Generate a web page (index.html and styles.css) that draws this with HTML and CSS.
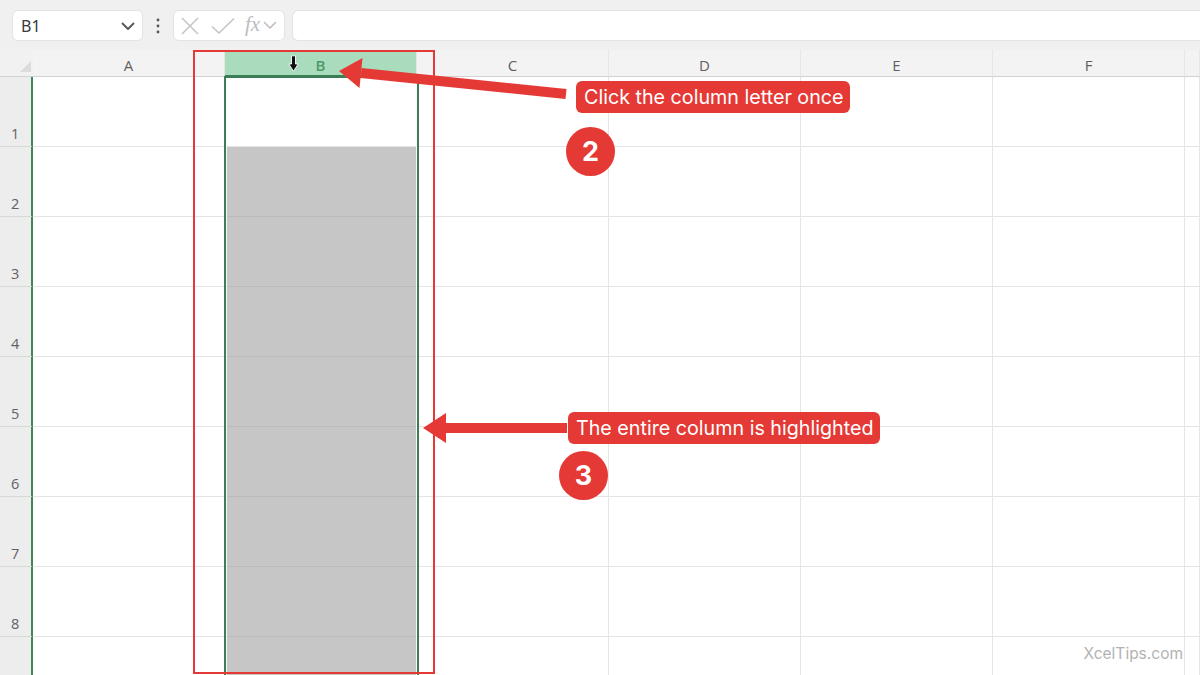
FILE: index.html
```html
<!DOCTYPE html>
<html lang="en">
<head>
<meta charset="utf-8">
<title>Select entire column</title>
<link rel="stylesheet" href="styles.css">
</head>
<body>
<div class="app">
  <header class="toolbar">
    <div class="namebox">
      <span class="ref">B1</span>
      <svg class="chev" width="14" height="9" viewBox="0 0 14 9"><path d="M1.5 1.5 L7 7 L12.5 1.5" fill="none" stroke="#555" stroke-width="1.8" stroke-linecap="round" stroke-linejoin="round"/></svg>
    </div>
    <svg class="kebab" width="4" height="16" viewBox="0 0 4 16"><circle cx="2" cy="2" r="1.4" fill="#555"/><circle cx="2" cy="8" r="1.4" fill="#555"/><circle cx="2" cy="14" r="1.4" fill="#555"/></svg>
    <div class="fbtns">
      <svg width="18" height="18" viewBox="0 0 18 18"><path d="M1 1 L17 17 M17 1 L1 17" stroke="#c4c4c4" stroke-width="1.5" fill="none"/></svg>
      <svg width="24" height="18" viewBox="0 0 24 18"><path d="M1 9.5 L8 16 L23 1.5" stroke="#c4c4c4" stroke-width="1.5" fill="none"/></svg>
      <span class="fx">fx</span>
      <svg width="14" height="9" viewBox="0 0 14 9"><path d="M1.5 1.5 L7 7 L12.5 1.5" fill="none" stroke="#bdbdbd" stroke-width="1.6" stroke-linecap="round" stroke-linejoin="round"/></svg>
    </div>
    <div class="finput"></div>
  </header>

  <div class="sheet">
    <div class="corner"><span class="tri"></span></div>
    <div class="colhead">A</div>
    <div class="colhead sel">
      <svg class="cursor" width="11" height="17" viewBox="0 0 11 17"><path d="M3.5 0.8 H7.5 V9 H10.2 L5.5 16.2 L0.8 9 H3.5 Z" fill="#111" stroke="#fff" stroke-width="0.9"/></svg>
      <span>B</span>
    </div>
    <div class="colhead">C</div>
    <div class="colhead">D</div>
    <div class="colhead">E</div>
    <div class="colhead">F</div>
    <div class="colhead"></div>

    <div class="rowhead">1</div><div class="cell"></div><div class="cell"></div><div class="cell"></div><div class="cell"></div><div class="cell"></div><div class="cell"></div><div class="cell"></div>
    <div class="rowhead">2</div><div class="cell"></div><div class="cell gray"></div><div class="cell"></div><div class="cell"></div><div class="cell"></div><div class="cell"></div><div class="cell"></div>
    <div class="rowhead">3</div><div class="cell"></div><div class="cell gray"></div><div class="cell"></div><div class="cell"></div><div class="cell"></div><div class="cell"></div><div class="cell"></div>
    <div class="rowhead">4</div><div class="cell"></div><div class="cell gray"></div><div class="cell"></div><div class="cell"></div><div class="cell"></div><div class="cell"></div><div class="cell"></div>
    <div class="rowhead">5</div><div class="cell"></div><div class="cell gray"></div><div class="cell"></div><div class="cell"></div><div class="cell"></div><div class="cell"></div><div class="cell"></div>
    <div class="rowhead">6</div><div class="cell"></div><div class="cell gray"></div><div class="cell"></div><div class="cell"></div><div class="cell"></div><div class="cell"></div><div class="cell"></div>
    <div class="rowhead">7</div><div class="cell"></div><div class="cell gray"></div><div class="cell"></div><div class="cell"></div><div class="cell"></div><div class="cell"></div><div class="cell"></div>
    <div class="rowhead">8</div><div class="cell"></div><div class="cell gray"></div><div class="cell"></div><div class="cell"></div><div class="cell"></div><div class="cell"></div><div class="cell"></div>
    <div class="rowhead"></div><div class="cell"></div><div class="cell gray"></div><div class="cell"></div><div class="cell"></div><div class="cell"></div><div class="cell"></div><div class="cell"></div>
  </div>

  <div class="selection"></div>
  <div class="redbox"></div>

  <svg class="arrows" width="1200" height="675" viewBox="0 0 1200 675">
    <line x1="566" y1="94" x2="361" y2="73" stroke="#e53935" stroke-width="10"/>
    <polygon points="339,71 362.5,58 359.5,88" fill="#e53935"/>
    <line x1="567" y1="428" x2="444" y2="428" stroke="#e53935" stroke-width="10"/>
    <polygon points="423,428 446,413 446,443" fill="#e53935"/>
  </svg>

  <div class="callout c1">Click the column letter once</div>
  <div class="badge b2">2</div>
  <div class="callout c2">The entire column is highlighted</div>
  <div class="badge b3">3</div>

  <div class="watermark">XcelTips.com</div>
</div>
</body>
</html>
```

FILE: styles.css
```css
html, body {
  margin: 0;
  padding: 0;
  background: #ffffff;
}

.app {
  position: relative;
  width: 1200px;
  height: 675px;
  overflow: hidden;
  font-family: "Open Sans", "Noto Sans", "Liberation Sans", sans-serif;
  background: #ffffff;
}

/* ---------- toolbar ---------- */
.toolbar {
  height: 50px;
  box-sizing: border-box;
  padding: 10px 0 9px 12px;
  display: flex;
  align-items: stretch;
  background: #f0f0f0;
}

.namebox {
  width: 131px;
  box-sizing: border-box;
  background: #ffffff;
  border: 1px solid #e3e3e3;
  border-radius: 6px;
  display: flex;
  align-items: center;
  justify-content: space-between;
  padding: 0 7px 0 8px;
}

.ref {
  font-size: 16px;
  color: #3a3a3a;
  font-family: "Noto Sans", "Open Sans", sans-serif;
}

.chev {
  margin-top: 2px;
}

.kebab {
  align-self: center;
  margin: 0 13px 0 13px;
}

.fbtns {
  width: 112px;
  box-sizing: border-box;
  background: #ffffff;
  border: 1px solid #e3e3e3;
  border-radius: 6px;
  display: flex;
  align-items: center;
  padding: 0 3px 0 7px;
}

.fbtns svg:first-child {
  margin-right: 12px;
}

.fbtns svg:nth-child(2) {
  margin-right: 10px;
}

.fx {
  font-family: "Liberation Serif", "DejaVu Serif", serif;
  font-style: italic;
  font-size: 21px;
  color: #bdbdbd;
  line-height: 1;
  margin-right: 3px;
  margin-top: -2px;
}

.finput {
  flex: 1;
  margin-left: 7px;
  background: #ffffff;
  border: 1px solid #e3e3e3;
  border-right: none;
  border-radius: 6px 0 0 6px;
}

/* ---------- sheet grid ---------- */
.sheet {
  display: grid;
  grid-template-columns: 33px repeat(6, 192px) 1fr;
  grid-template-rows: 27px repeat(9, 70px);
  height: 625px;
  overflow: hidden;
}

.corner {
  background: #f1f1f1;
  border-bottom: 1px solid #d2d2d2;
  position: relative;
}

.tri {
  position: absolute;
  right: 2px;
  bottom: 4px;
  width: 0;
  height: 0;
  border-left: 11px solid transparent;
  border-bottom: 11px solid #dcdcdc;
}

.colhead {
  background: #f3f3f3;
  border-bottom: 1px solid #d2d2d2;
  border-right: 1px solid #e6e6e6;
  display: flex;
  align-items: center;
  justify-content: center;
  font-size: 15px;
  color: #5f5f5f;
  padding-top: 3px;
  box-sizing: border-box;
}

.colhead.sel {
  position: relative;
  background: #a9dcbc;
  color: #4b9a68;
  font-weight: 600;
  border-bottom: 2px solid #3b7d55;
  margin-top: 2px;
  padding-top: 2px;
}

.cursor {
  position: absolute;
  left: 63px;
  top: 3px;
}

.rowhead {
  background: #ededed;
  border-right: 2px solid #3f8559;
  border-bottom: 1px solid #d8d8d8;
  display: flex;
  align-items: flex-end;
  padding: 0 0 3px 11px;
  box-sizing: border-box;
  font-size: 14.5px;
  color: #626262;
}

.cell {
  border-right: 1px solid #e4e4e4;
  border-bottom: 1px solid #e4e4e4;
  box-sizing: border-box;
  background: #ffffff;
}

.cell.gray {
  background: #c6c6c6;
  border-bottom-color: #bbbbbb;
}

/* ---------- overlays ---------- */
.selection {
  position: absolute;
  left: 224px;
  top: 76px;
  width: 195px;
  height: 610px;
  box-sizing: border-box;
  border: 2px solid #3b7d55;
  box-shadow: inset 0 0 0 1px rgba(255, 255, 255, 0.85);
}

.redbox {
  position: absolute;
  left: 193px;
  top: 50px;
  width: 242px;
  height: 624px;
  box-sizing: border-box;
  border: 2px solid #e53935;
}

.arrows {
  position: absolute;
  left: 0;
  top: 0;
}

.callout {
  position: absolute;
  height: 32px;
  box-sizing: border-box;
  background: #e53935;
  color: #ffffff;
  border-radius: 6px;
  font-family: Inter, "Noto Sans", sans-serif;
  font-size: 19.7px;
  line-height: 32px;
  padding: 0 8px;
  white-space: nowrap;
}

.c1 {
  left: 576px;
  top: 81px;
  width: 274px;
}

.c2 {
  left: 568px;
  top: 412px;
  width: 312px;
}

.badge {
  position: absolute;
  width: 49px;
  height: 49px;
  border-radius: 50%;
  background: #e53935;
  color: #ffffff;
  font-family: Inter, "Noto Sans", sans-serif;
  font-weight: 700;
  font-size: 27px;
  display: flex;
  align-items: center;
  justify-content: center;
}

.b2 {
  left: 566px;
  top: 127px;
}

.b3 {
  left: 559px;
  top: 451px;
}

.watermark {
  position: absolute;
  right: 17px;
  bottom: 12px;
  font-family: Inter, "Noto Sans", sans-serif;
  font-size: 15.5px;
  color: #b3b3b3;
}
```
